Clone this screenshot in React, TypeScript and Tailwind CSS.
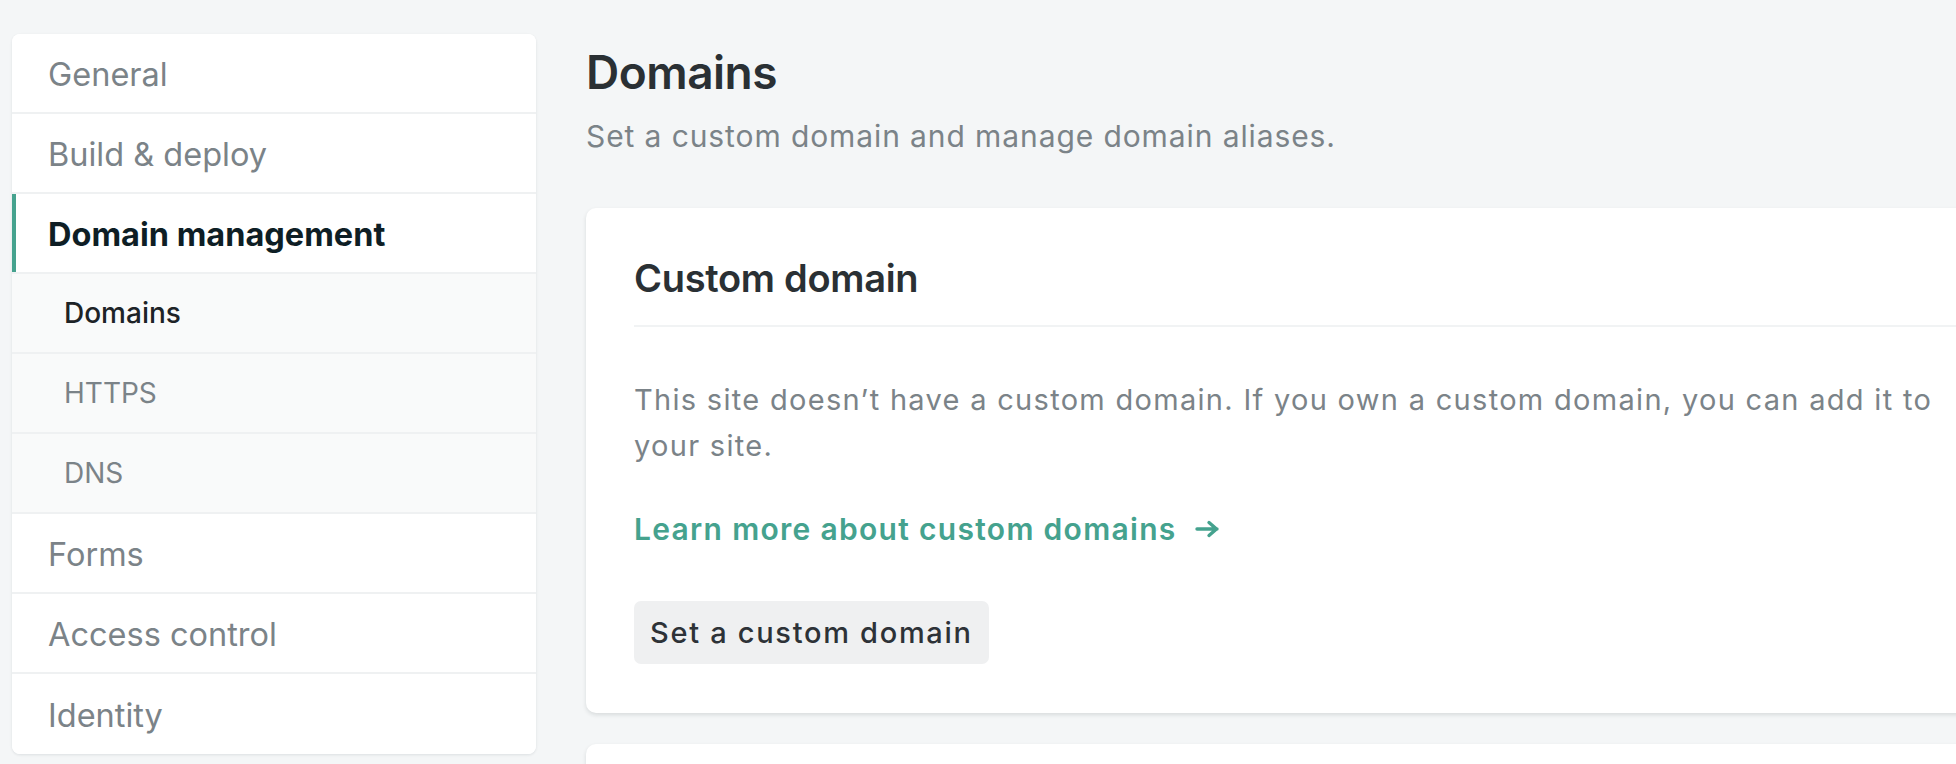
import React from "react";

type NavItem = {
  label: string;
  sub?: boolean;
  active?: boolean;
  current?: boolean;
};

const navItems: NavItem[] = [
  { label: "General" },
  { label: "Build & deploy" },
  { label: "Domain management", active: true },
  { label: "Domains", sub: true, current: true },
  { label: "HTTPS", sub: true },
  { label: "DNS", sub: true },
  { label: "Forms" },
  { label: "Access control" },
  { label: "Identity" },
];

function SideNav() {
  return (
    <nav className="mt-[34px] ml-[12px] w-[524px] shrink-0 self-start overflow-hidden rounded-[8px] bg-white shadow-[0_1px_3px_rgba(14,30,37,0.10)]">
      {navItems.map((item, i) => (
        <div
          key={item.label}
          className={[
            "relative flex h-[80px] items-center",
            i < navItems.length - 1 ? "border-b-2 border-[#eff1f2]" : "",
            item.sub
              ? "bg-[#f9fafa] pl-[52px] text-[28px]"
              : "bg-white pt-[4px] pl-[36px] text-[32.5px]",
            item.active ? "font-bold text-[#0e1e25]" : "",
            item.current ? "font-medium text-[#1d2327]" : "",
            !item.active && !item.current ? "text-[#7b8388]" : "",
          ].join(" ")}
        >
          {item.active && (
            <span className="absolute top-0 bottom-0 left-0 w-[4px] bg-[#45a28e]" />
          )}
          {item.label}
        </div>
      ))}
    </nav>
  );
}

function ArrowRight() {
  return (
    <svg width="26" height="18" viewBox="0 0 26 18" fill="none" className="ml-[18px] inline-block">
      <path
        d="M2 9h20M14 2.5 21.5 9 14 15.5"
        stroke="#45a28e"
        strokeWidth="3.4"
        strokeLinecap="round"
        strokeLinejoin="round"
      />
    </svg>
  );
}

export default function App() {
  return (
    <div
      className="flex h-[764px] w-[1956px] overflow-hidden bg-[#f4f6f7]"
      style={{ fontFamily: "Inter, 'Noto Sans', sans-serif" }}
    >
      <SideNav />
      <main className="ml-[50px] w-[1440px] shrink-0">
        <h1 className="mt-[44px] text-[46px] leading-[56px] font-semibold tracking-[-0.5px] text-[#2a3034]">
          Domains
        </h1>
        <p className="mt-[16px] text-[30px] leading-[40px] tracking-[0.9px] text-[#7b8388]">
          Set a custom domain and manage domain aliases.
        </p>

        <section className="mt-[52px] rounded-[10px] bg-white px-[48px] pt-[46px] pb-[49px] shadow-[0_2px_4px_rgba(14,30,37,0.12)]">
          <h2 className="text-[38px] leading-[48px] font-semibold tracking-[-0.3px] text-[#2a3034]">
            Custom domain
          </h2>
          <div className="mt-[23px] h-[2px] bg-[#f1f3f4]" />
          <p className="mt-[50px] w-[1316px] text-[29px] leading-[46px] tracking-[1.3px] text-[#7b8388]">
            This site doesn’t have a custom domain. If you own a custom domain, you can add it to your site.
          </p>
          <a className="mt-[38px] flex items-center text-[30px] leading-[44px] font-semibold tracking-[1.3px] text-[#45a28e]">
            Learn more about custom domains
            <ArrowRight />
          </a>
          <button className="mt-[50px] flex h-[63px] items-center rounded-[7px] bg-[#eff0f1] px-[16px] text-[29px] font-medium tracking-[1.7px] text-[#2d3237]">
            Set a custom domain
          </button>
        </section>

        <section className="mt-[31px] h-[120px] rounded-[10px] bg-white shadow-[0_2px_4px_rgba(14,30,37,0.12)]" />
      </main>
    </div>
  );
}
